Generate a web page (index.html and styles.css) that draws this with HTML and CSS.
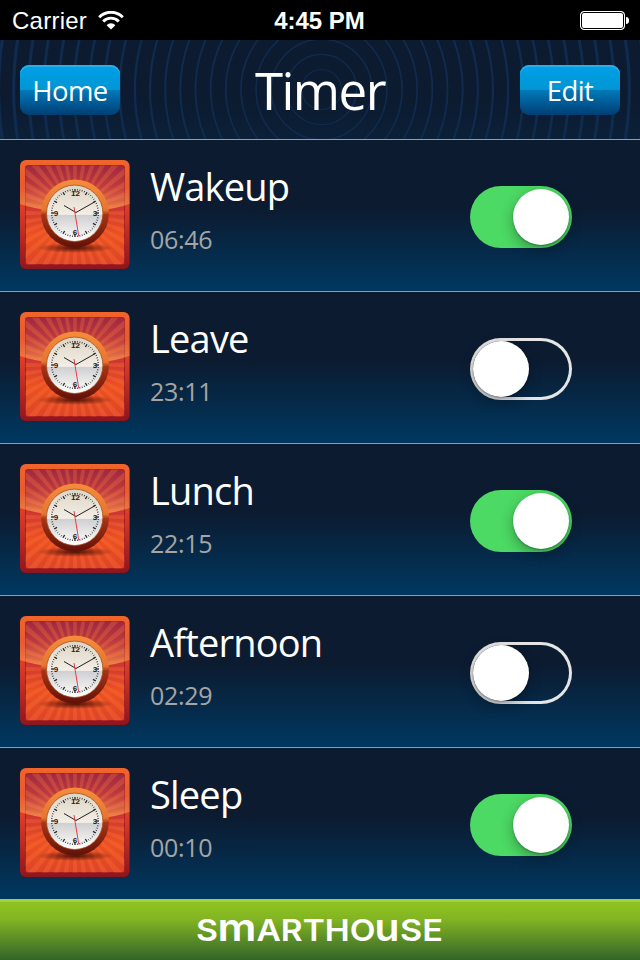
FILE: index.html
```html
<!DOCTYPE html>
<html lang="en">
<head>
    <meta charset="UTF-8">
    <meta name="viewport" content="width=device-width, initial-scale=1.0">
    <title>Timer</title>
    <link rel="stylesheet" href="styles.css">
</head>
<body>
    <div class="status-bar">
        <div class="carrier">
            <span>Carrier</span>
            <svg class="wifi" width="26" height="19" viewBox="0 0 26 19">
                <g fill="none" stroke="#fff" stroke-width="2.9">
                    <path d="M1.2 6.2a16.5 16.5 0 0 1 23.6 0"/>
                    <path d="M5.2 10.5a10.8 10.8 0 0 1 15.6 0"/>
                </g>
                <path d="M8.6 14.2a6.2 6.2 0 0 1 8.8 0L13 18.5z" fill="#fff"/>
            </svg>
        </div>
        <div class="clock">4:45 PM</div>
        <div class="battery"><span></span></div>
    </div>

    <header class="header">
        <svg class="rings" id="rings" width="640" height="99" viewBox="0 0 640 99"></svg>
        <button class="nav-btn">Home</button>
        <h1>Timer</h1>
        <button class="nav-btn">Edit</button>
    </header>

    <ul class="timers" id="timers"></ul>

    <footer class="footer">
        <svg width="250" height="58" viewBox="0 0 250 58">
            <g class="logo">
                <text x="1" y="39" textLength="22" lengthAdjust="spacingAndGlyphs">S</text>
                <text class="low" x="22.5" y="39" textLength="39" lengthAdjust="spacingAndGlyphs">m</text>
                <text x="61.5" y="39" textLength="119" lengthAdjust="spacingAndGlyphs">ARTHO</text>
                <text class="low" x="179.5" y="39" textLength="25" lengthAdjust="spacingAndGlyphs">u</text>
                <text x="205" y="39" textLength="43" lengthAdjust="spacingAndGlyphs">SE</text>
            </g>
        </svg>
    </footer>

    <script src="script.js"></script>
</body>
</html>
```
FILE: styles.css
```css
* { box-sizing: border-box; }

body { margin: 0; width: 640px; height: 960px; overflow: hidden; background: #0c1b30; color: #fff; font-family: "Open Sans", "Noto Sans", sans-serif; }

.status-bar { display: grid; grid-template-columns: 1fr auto 1fr; align-items: center; height: 40px; padding: 0 11px 0 12px; background: #000; font-family: "Liberation Sans", Arial, sans-serif; font-size: 24px; }

.carrier { display: flex; align-items: center; gap: 11px; letter-spacing: .25px; }

.carrier span { padding-top: 2px; }

.clock { padding: 2px 2px 0 0; font-weight: bold; }

.battery { justify-self: end; display: flex; align-items: center; }

.battery span { width: 45px; height: 19px; border: 1px solid #fff; border-radius: 4px; background: #fff; box-shadow: inset 0 0 0 1px #000; }

.battery::after { content: ""; width: 3px; height: 7px; margin-left: 1px; border-radius: 0 3px 3px 0; background: #fff; }

.header { position: relative; display: flex; align-items: center; justify-content: space-between; height: 100px; padding: 0 20px; border-bottom: 1px solid #8fb924; background: linear-gradient(#0c1b30 60%, #0b2038); }

.rings { position: absolute; top: 0; left: 0; fill: none; stroke: #112b4f; }

h1 { position: relative; margin: 0; font-size: 51px; font-weight: normal; line-height: 60px; letter-spacing: -1.5px; }

.nav-btn { position: relative; width: 100px; height: 50px; padding: 2px 0 0; border: none; border-radius: 9px; background: linear-gradient(#00a0e9, #0096d2 50%, #007ab9 50%, #003e75); box-shadow: inset 0 2px 0 #2aaeea; color: #fff; font: 27.5px "Open Sans", sans-serif; letter-spacing: -.6px; }

.timers { list-style: none; margin: 0; padding: 0; }

.timer { display: flex; height: 152px; padding: 20px 68px 0 20px; border-bottom: 1px solid #8fb924; background: linear-gradient(#0c1b30 0, #0c1b30 45%, #00375f 98%); }

.timer:last-child { height: 151px; border-bottom: none; }

.timer-icon { width: 110px; height: 110px; }

.timer-info { flex: 1; padding-left: 20px; }

.timer-name { margin-top: -1px; font-size: 38px; line-height: 54px; letter-spacing: -.8px; }

.timer-time { margin-top: 8px; color: #a5a5a5; font-size: 25px; line-height: 36px; letter-spacing: -.3px; }

.dial { fill: #222; font: bold 8px "Liberation Sans", Arial, sans-serif; text-anchor: middle; }

.switch { width: 102px; height: 62px; margin-top: 26px; padding: 3px; border-radius: 31px; box-shadow: inset 0 0 0 3px #e5e5e5; }

.switch span { display: block; width: 56px; height: 56px; border-radius: 50%; background: #fff; box-shadow: 0 5px 14px rgba(0, 0, 0, .3), 0 1px 2px rgba(0, 0, 0, .3); }

.switch.on { background: #4cd964; box-shadow: none; }

.switch.on span { margin-left: 40px; }

.footer { display: flex; justify-content: center; height: 61px; border-top: 3px solid #a5cd46; background: linear-gradient(#8fc31f, #82b423 30%, #32642a); }

.logo { fill: #fff; font-family: Inter, sans-serif; font-size: 30px; font-weight: 600; }

.low { font-size: 38px; }
```
FILE: script.js
```js
const timers = [
    { name: 'Wakeup', time: '06:46', on: true },
    { name: 'Leave', time: '23:11', on: false },
    { name: 'Lunch', time: '22:15', on: true },
    { name: 'Afternoon', time: '02:29', on: false },
    { name: 'Sleep', time: '00:10', on: true }
];

// Header rings, thicker towards the edges
let circles = '';
for (let i = 0; i < 21; i++) {
    circles += `<circle cx="321.5" cy="49.5" r="${20 + i * 15.15}" stroke-width="${1.2 + i * .1}"/>`;
}
document.getElementById('rings').innerHTML = circles;

// Sun rays behind the clock
function rays() {
    let d = '';
    for (let i = 0; i < 36; i++) {
        const a = (i * 10 - 2.5) * Math.PI / 180;
        const b = (i * 10 + 2.5) * Math.PI / 180;
        d += `M55 53L${55 + 90 * Math.cos(a)} ${53 + 90 * Math.sin(a)}L${55 + 90 * Math.cos(b)} ${53 + 90 * Math.sin(b)}z`;
    }
    return d;
}

// Minute marks
function ticks() {
    let out = '';
    for (let i = 0; i < 60; i++) {
        const big = i % 5 === 0;
        out += `<path d="M55 29V${big ? 32.2 : 30.4}" stroke="#222" stroke-width="${big ? 1.3 : .8}" transform="rotate(${i * 6} 55 53)"/>`;
    }
    return out;
}

// Gradients shared by all the icons
const defs = `
    <defs>
        <linearGradient id="frame" x2="0" y2="1"><stop stop-color="#f1642a"/><stop offset=".45" stop-color="#dc3c28"/><stop offset="1" stop-color="#8d151d"/></linearGradient>
        <linearGradient id="inner" x2="0" y2="1"><stop stop-color="#9c2440"/><stop offset=".35" stop-color="#c52e36"/><stop offset=".7" stop-color="#ec5222"/><stop offset="1" stop-color="#de4427"/></linearGradient>
        <linearGradient id="ring" x2="0" y2="1"><stop stop-color="#f58c3a"/><stop offset=".45" stop-color="#e67530"/><stop offset=".52" stop-color="#a83414"/><stop offset="1" stop-color="#611108"/></linearGradient>
        <linearGradient id="face" x2="0" y2="1"><stop stop-color="#dcd4c5"/><stop offset=".52" stop-color="#f3eee6"/><stop offset=".53" stop-color="#cfcfd1"/><stop offset="1" stop-color="#fff"/></linearGradient>
        <linearGradient id="gloss" x2="0" y2="1"><stop stop-color="#ffb45a" stop-opacity="0"/><stop offset=".5" stop-color="#ffb45a" stop-opacity=".12"/><stop offset="1" stop-color="#ffb45a" stop-opacity=".6"/></linearGradient>
        <radialGradient id="shade"><stop stop-color="#3c0a05" stop-opacity=".9"/><stop offset="1" stop-color="#3c0a05" stop-opacity="0"/></radialGradient>
        <clipPath id="square"><rect x="5.5" y="5.5" width="99" height="99" rx="2"/></clipPath>
    </defs>`;

const icon = `
    <svg class="timer-icon" viewBox="0 0 110 110">
        ${defs}
        <rect width="110" height="110" rx="6" fill="#4a1625"/>
        <rect width="109.5" height="109" rx="6" fill="url(#frame)"/>
        <rect x="5.5" y="5.5" width="99" height="99" rx="2" fill="url(#inner)" stroke="#a31e24" stroke-width="1"/>
        <g clip-path="url(#square)"><path d="${rays()}" fill="#ff7a3a" opacity=".28"/></g>
        <path d="M0 44Q55 61 109.5 44V6a6 6 0 0 0-6-6H6a6 6 0 0 0-6 6z" fill="url(#gloss)"/>
        <ellipse cx="55" cy="88" rx="38" ry="5" fill="url(#shade)"/>
        <circle cx="55" cy="53.5" r="34" fill="url(#ring)"/>
        <circle cx="54.7" cy="53.3" r="28.2" fill="url(#face)" stroke="#a84a20" stroke-width=".8"/>
        ${ticks()}
        <g class="dial">
            <text x="55.5" y="36">12</text><text x="75" y="56">3</text>
            <text x="55" y="74.7">6</text><text x="36" y="56">9</text>
        </g>
        <path d="M44 45.5l12 7L74.5 42" fill="none" stroke="#222" stroke-width="1"/>
        <path d="M54 47l4.8 29.5" stroke="#ee2838" stroke-width=".9"/>
    </svg>`;

document.getElementById('timers').innerHTML = timers.map(timer => `
    <li class="timer">
        ${icon}
        <div class="timer-info">
            <div class="timer-name">${timer.name}</div>
            <div class="timer-time">${timer.time}</div>
        </div>
        <div class="switch ${timer.on ? 'on' : ''}"><span></span></div>
    </li>`).join('');
```
